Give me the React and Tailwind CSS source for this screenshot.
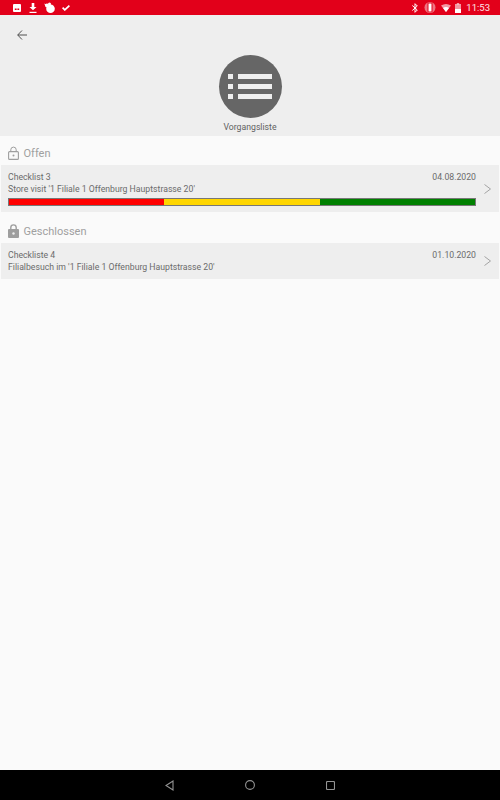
import React from 'react';

const StatusBar = () => (
  <div className="h-[15px] bg-[#e2001a] flex items-center justify-between pl-[13px] pr-[10px] shrink-0">
    <div className="flex items-center">
      <svg width="8" height="8" viewBox="0 0 8 8"><rect width="8" height="8" rx="1" fill="#fff" /><rect x="1.800" y="4.500" width="1.800" height="1.500" fill="#e2001a" /><rect x="4.400" y="4.500" width="1.800" height="1.500" fill="#e2001a" /></svg>
      <svg className="ml-[8px]" width="8" height="10" viewBox="0 0 8 10" fill="#fff"><path d="M2.700 0h2.600v4h2.200L4 7.300 0.500 4h2.200z" /><rect x="0.500" y="8.800" width="7" height="1.200" /></svg>
      <svg className="ml-[7px] -mt-[1px]" width="11" height="11" viewBox="0 0 11 11" fill="#fff"><circle cx="6.500" cy="6.700" r="4.300" /><circle cx="3" cy="3.500" r="2" /><circle cx="5.500" cy="2" r="1.500" /><path d="M0.300 1.500l2 1-1 1.500z" /></svg>
      <svg className="ml-[7px]" width="8" height="6" viewBox="0 0 8 6" fill="none" stroke="#fff" strokeWidth="1.700"><path d="M0.600 2.700l2.200 2.200 4.600-4.300" /></svg>
    </div>
    <div className="flex items-center">
      <svg width="6" height="10" viewBox="0 0 6 10" fill="none" stroke="#fff" strokeWidth="1"><path d="M0.300 2.500l5 4.500-2.300 2.300V0.700l2.300 2.300-5 4.500" /></svg>
      <svg className="ml-[6px]" width="12" height="11" viewBox="0 0 12 11"><circle cx="6" cy="5.500" r="5.500" fill="#fff" fillOpacity="0.45" /><rect x="3.500" y="0.800" width="5" height="9.400" rx="1" fill="#e2001a" /><rect x="4.500" y="1.500" width="3" height="8" fill="#fff" /></svg>
      <svg className="ml-[5px]" width="10" height="8" viewBox="0 0 10 8"><path d="M0 1.500Q5 -1.500 10 1.500L5 8z" fill="#fff" fillOpacity="0.6" /><path d="M2 4Q5 2 8 4L5 8z" fill="#fff" /></svg>
      <svg className="ml-[4px]" width="6" height="10" viewBox="0 0 6 10"><rect x="1.800" width="2.400" height="1.500" fill="#fff" fillOpacity="0.6" /><rect y="1" width="6" height="5" fill="#fff" fillOpacity="0.6" /><rect y="6" width="6" height="4" fill="#fff" /></svg>
      <span className="ml-[5px] text-[9.500px] leading-none text-white/90">11:53</span>
    </div>
  </div>
);

const LockIcon = ({ open }) => (
  <svg className="-mt-[1px]" width="11" height="14" viewBox="0 0 11 14">
    {open ? (
      <>
        <path d="M2.800 6V3.800a2.700 2.700 0 0 1 5.400 0V6" fill="none" stroke="#9e9e9e" strokeWidth="1" />
        <rect x="0.600" y="5.600" width="9.800" height="7.800" rx="1" fill="none" stroke="#9e9e9e" strokeWidth="1.100" />
        <circle cx="5.500" cy="9.500" r="1" fill="#9e9e9e" />
      </>
    ) : (
      <>
        <path d="M2.800 6V3.600a2.700 2.700 0 0 1 5.400 0V6" fill="none" stroke="#9e9e9e" strokeWidth="1.400" />
        <rect y="5" width="11" height="9" rx="1" fill="#9e9e9e" />
        <circle cx="5.500" cy="9.500" r="1.200" fill="#eeeeee" />
      </>
    )}
  </svg>
);

const SectionTitle = ({ open, label, className }) => (
  <div className={`flex items-center gap-[4.500px] pl-[8px] ${className}`}>
    <LockIcon open={open} />
    <span className="text-[11px] leading-none text-[#a0a0a0]">{label}</span>
  </div>
);

const Chevron = () => (
  <svg width="7" height="10" viewBox="0 0 7 10" fill="none" stroke="#a3a3a3" strokeWidth="1"><path d="M0.500 0.500l6 4.500-6 4.500" /></svg>
);

const Row = ({ title, subtitle, date, progress, className }) => (
  <div className={`mx-[1px] bg-[#eeeeee] flex items-center ${className}`}>
    <div className="w-[475px] pl-[7px] shrink-0">
      <div className="flex justify-between text-[8.700px] leading-[12px] text-[#6b6b6b]">
        <span>{title}</span>
        <span>{date}</span>
      </div>
      <div className="text-[8.700px] leading-[12px] text-[#6b6b6b]">{subtitle}</div>
      {progress && (
        <div className="mt-[3px] h-[8px] flex border border-[#777777]">
          <div className="w-[155px] bg-[#ff0000]" />
          <div className="w-[156px] bg-[#ffd600]" />
          <div className="flex-1 bg-[#008000]" />
        </div>
      )}
    </div>
    <div className="ml-[8px] flex"><Chevron /></div>
  </div>
);

const NavBar = () => (
  <div className="h-[30px] bg-black flex items-center justify-center shrink-0">
    <svg width="9" height="11" viewBox="0 0 9 11" fill="none" stroke="#949494" strokeWidth="1.100"><path d="M8 1v9L1 5.500z" /></svg>
    <svg className="ml-[71px]" width="10" height="10" viewBox="0 0 10 10" fill="none" stroke="#949494" strokeWidth="1.100"><circle cx="5" cy="5" r="4.400" /></svg>
    <svg className="ml-[71px]" width="9" height="9" viewBox="0 0 9 9" fill="none" stroke="#949494" strokeWidth="1.100"><rect x="0.500" y="0.500" width="8" height="8" rx="1" /></svg>
  </div>
);

export default function App() {
  return (
    <div className="w-[500px] h-[800px] flex flex-col bg-[#fafafa] overflow-hidden font-['Roboto',sans-serif]">
      <StatusBar />

      <div className="h-[121px] bg-[#eeeeee] shrink-0 flex flex-col items-center relative pt-[40px]">
        <button className="absolute left-[17px] top-[15px] flex">
          <svg width="10" height="10" viewBox="0 0 10 10" fill="none" stroke="#4f4f4f" strokeWidth="1"><path d="M10 5H0.800M5 0.500L0.700 5 5 9.500" /></svg>
        </button>
        <div className="w-[63px] h-[63px] rounded-full bg-[#666666] flex items-center justify-center">
          <svg width="44" height="25" viewBox="0 0 44 25" fill="#eeeeee">
            <rect y="0" width="5" height="5" />
            <rect y="10" width="5" height="5" />
            <rect y="20" width="5" height="5" />
            <rect x="10" y="0" width="34" height="5" />
            <rect x="10" y="10" width="34" height="5" />
            <rect x="10" y="20" width="34" height="5" />
          </svg>
        </div>
        <span className="mt-[4px] text-[8.700px] leading-[11px] text-[#616161]">Vorgangsliste</span>
      </div>

      <div className="flex-1">
        <SectionTitle open label="Offen" className="h-[29px] pt-[6px]" />
        <Row
          title="Checklist 3"
          subtitle="Store visit '1 Filiale 1 Offenburg Hauptstrasse 20'"
          date="04.08.2020"
          progress
          className="h-[47px]"
        />
        <SectionTitle label="Geschlossen" className="h-[31px] pt-[8px]" />
        <Row
          title="Checkliste 4"
          subtitle="Filialbesuch im '1 Filiale 1 Offenburg Hauptstrasse 20'"
          date="01.10.2020"
          className="h-[36px]"
        />
      </div>

      <NavBar />
    </div>
  );
}
